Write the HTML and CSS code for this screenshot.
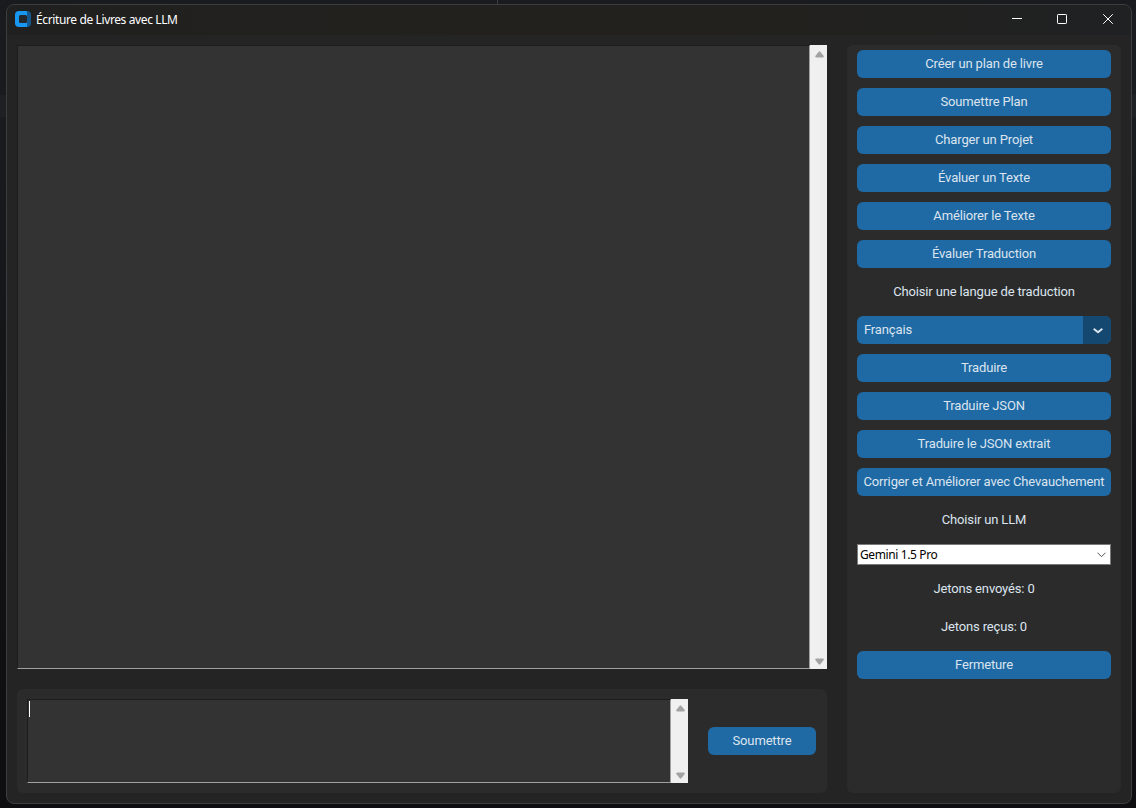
FILE: index.html
```html
<!DOCTYPE html>
<html lang="fr">
<head>
    <meta charset="UTF-8">
    <meta name="viewport" content="width=device-width, initial-scale=1.0">
    <title>Écriture de Livres avec LLM</title>
    <link rel="stylesheet" href="styles.css">
</head>
<body>
    <div class="window">
        <div class="titlebar">
            <svg class="logo" width="16" height="16" viewBox="0 0 16 16">
                <path d="M4 0h8v16H4a4 4 0 0 1-4-4V4a4 4 0 0 1 4-4z" fill="#1797f0"/>
                <path d="M12 0a4 4 0 0 1 4 4v8a4 4 0 0 1-4 4z" fill="#13598f"/>
                <rect x="4" y="4" width="8" height="8" rx="1.5" fill="#22282d"/>
            </svg>
            <h1>Écriture de Livres avec LLM</h1>
            <div class="controls">
                <svg width="12" height="12" viewBox="0 0 12 12"><path d="M2 5.5h10"/></svg>
                <svg width="12" height="12" viewBox="0 0 12 12"><rect x="1.5" y="1.5" width="9" height="9" rx="0.7"/></svg>
                <svg width="12" height="12" viewBox="0 0 12 12"><path d="M1.2 1.2l9.6 9.6M10.8 1.2l-9.6 9.6"/></svg>
            </div>
        </div>

        <div class="main">
            <div class="left">
                <div class="textbox output">
                    <div class="text"></div>
                    <div class="scrollbar">
                        <svg width="9" height="7" viewBox="0 0 9 7"><path d="M3.7.8q.8-.9 1.6 0L8.7 5Q9.1 6.5 7.7 6.5H1.3Q-.1 6.5.3 5z"/></svg>
                        <svg class="down" width="9" height="7" viewBox="0 0 9 7"><path d="M3.7.8q.8-.9 1.6 0L8.7 5Q9.1 6.5 7.7 6.5H1.3Q-.1 6.5.3 5z"/></svg>
                    </div>
                </div>
                <div class="prompt">
                    <div class="textbox">
                        <div class="text"><div class="caret"></div></div>
                        <div class="scrollbar">
                            <svg width="9" height="7" viewBox="0 0 9 7"><path d="M3.7.8q.8-.9 1.6 0L8.7 5Q9.1 6.5 7.7 6.5H1.3Q-.1 6.5.3 5z"/></svg>
                            <svg class="down" width="9" height="7" viewBox="0 0 9 7"><path d="M3.7.8q.8-.9 1.6 0L8.7 5Q9.1 6.5 7.7 6.5H1.3Q-.1 6.5.3 5z"/></svg>
                        </div>
                    </div>
                    <button class="btn">Soumettre</button>
                </div>
            </div>

            <div class="sidebar">
                <button class="btn">Créer un plan de livre</button>
                <button class="btn">Soumettre Plan</button>
                <button class="btn">Charger un Projet</button>
                <button class="btn">Évaluer un Texte</button>
                <button class="btn">Améliorer le Texte</button>
                <button class="btn">Évaluer Traduction</button>
                <div class="label">Choisir une langue de traduction</div>
                <div class="option">
                    <span>Français</span>
                    <div class="arrow">
                        <svg width="10" height="6" viewBox="0 0 10 6"><path d="M1.3 1.3L5 4.2l3.7-2.9"/></svg>
                    </div>
                </div>
                <button class="btn">Traduire</button>
                <button class="btn">Traduire JSON</button>
                <button class="btn">Traduire le JSON extrait</button>
                <button class="btn">Corriger et Améliorer avec Chevauchement</button>
                <div class="label">Choisir un LLM</div>
                <div class="combo">
                    <span>Gemini 1.5 Pro</span>
                    <svg width="9" height="6" viewBox="0 0 9 6"><path d="M.5.7l4 4 4-4"/></svg>
                </div>
                <div class="label">Jetons envoyés: 0</div>
                <div class="label">Jetons reçus: 0</div>
                <button class="btn">Fermeture</button>
            </div>
        </div>
    </div>
</body>
</html>
```
FILE: styles.css
```css
*{
    padding: 0;
    margin: 0;
    box-sizing: border-box;
}

body{
    height: 808px;
    padding: 4px 4px 4px 6px;
    overflow: hidden;
    /* bits of the desktop around the window */
    background:
        linear-gradient(#3a3d40, #3a3d40) 497px 0 / 1px 4px no-repeat,
        linear-gradient(#1f2024, #1f2024) 0 95px / 100% 22px no-repeat,
        linear-gradient(#191b1e, #191b1e 15%, #121214 60%, #0e0e10);
    font-family: Roboto, sans-serif;
    font-size: 13px;
    letter-spacing: -0.15px;
    color: #dce4ee;
}

.window{
    width: 1126px;
    height: 800px;
    background: #242424;
    border: 1px solid #3b3d3e;
    border-radius: 8px;
    overflow: hidden;
}

.titlebar{
    display: flex;
    align-items: center;
    height: 30px;
    padding: 0 17px 2px 8px;
    background: linear-gradient(90deg, #202020, #22211d 40%, #22211d 65%, #202123);
}

.titlebar h1{
    margin-left: 5px;
    font-family: "Noto Sans", sans-serif;
    font-size: 12px;
    font-weight: normal;
    letter-spacing: -0.38px;
    color: #fff;
}

.controls{
    display: flex;
    gap: 34px;
    margin-left: auto;
}

.controls svg{
    fill: none;
    stroke: #fff;
    stroke-width: 1;
}

.main{
    display: flex;
    gap: 20px;
    height: 768px;
    padding: 10px;
}

.left{
    display: flex;
    flex-direction: column;
    gap: 20px;
    width: 810px;
}

.textbox{
    display: flex;
    height: 84px;
    width: 661px;
}

.output{
    width: 810px;
    height: 624px;
}

.text{
    flex: 1;
    padding: 1px;
    background: #333;
    border: 1px solid;
    border-color: #1d1d1d #a0a0a0 #a0a0a0 #1d1d1d;
}

.caret{
    width: 1px;
    height: 16px;
    background: #fff;
}

.scrollbar{
    display: flex;
    flex-direction: column;
    justify-content: space-between;
    align-items: center;
    width: 17px;
    padding: 6px 0 4px 1px;
    background: #f0f0f0;
}

.scrollbar svg{
    fill: #a3a3a3;
}

.scrollbar .down{
    transform: rotate(180deg);
}

.prompt{
    display: flex;
    align-items: center;
    gap: 20px;
    height: 104px;
    padding: 10px;
    background: #2b2b2b;
    border-radius: 6px;
}

.prompt .btn{
    width: 108px;
}

.sidebar{
    display: flex;
    flex-direction: column;
    gap: 10px;
    width: 274px;
    height: 748px;
    padding: 5px 10px;
    background: #2b2b2b;
    border-radius: 6px;
}

.btn{
    height: 28px;
    padding-bottom: 1px;
    border: none;
    border-radius: 6px;
    background: #1f6aa5;
    color: #dce4ee;
    font-family: inherit;
    font-size: 13px;
    letter-spacing: inherit;
    white-space: nowrap;
}

.label{
    height: 28px;
    line-height: 27px;
    text-align: center;
}

.option{
    display: flex;
    justify-content: space-between;
    height: 28px;
    padding-left: 7px;
    line-height: 27px;
    background: #1f6aa5;
    border-radius: 6px;
    overflow: hidden;
}

.arrow{
    display: flex;
    align-items: center;
    justify-content: center;
    width: 28px;
    padding: 1px 0 0 1px;
    background: #144870;
}

.arrow svg{
    fill: none;
    stroke: #dce4ee;
    stroke-width: 2;
    stroke-linecap: round;
    stroke-linejoin: round;
}

.combo{
    display: flex;
    align-items: center;
    justify-content: space-between;
    height: 21px;
    padding: 0 4px 0 2px;
    background: #fff;
    border: 1px solid #7a7a7a;
    font-family: "Noto Sans", sans-serif;
    font-size: 12px;
    letter-spacing: -0.38px;
    color: #000;
}

.combo svg{
    fill: none;
    stroke: #555;
}
```
